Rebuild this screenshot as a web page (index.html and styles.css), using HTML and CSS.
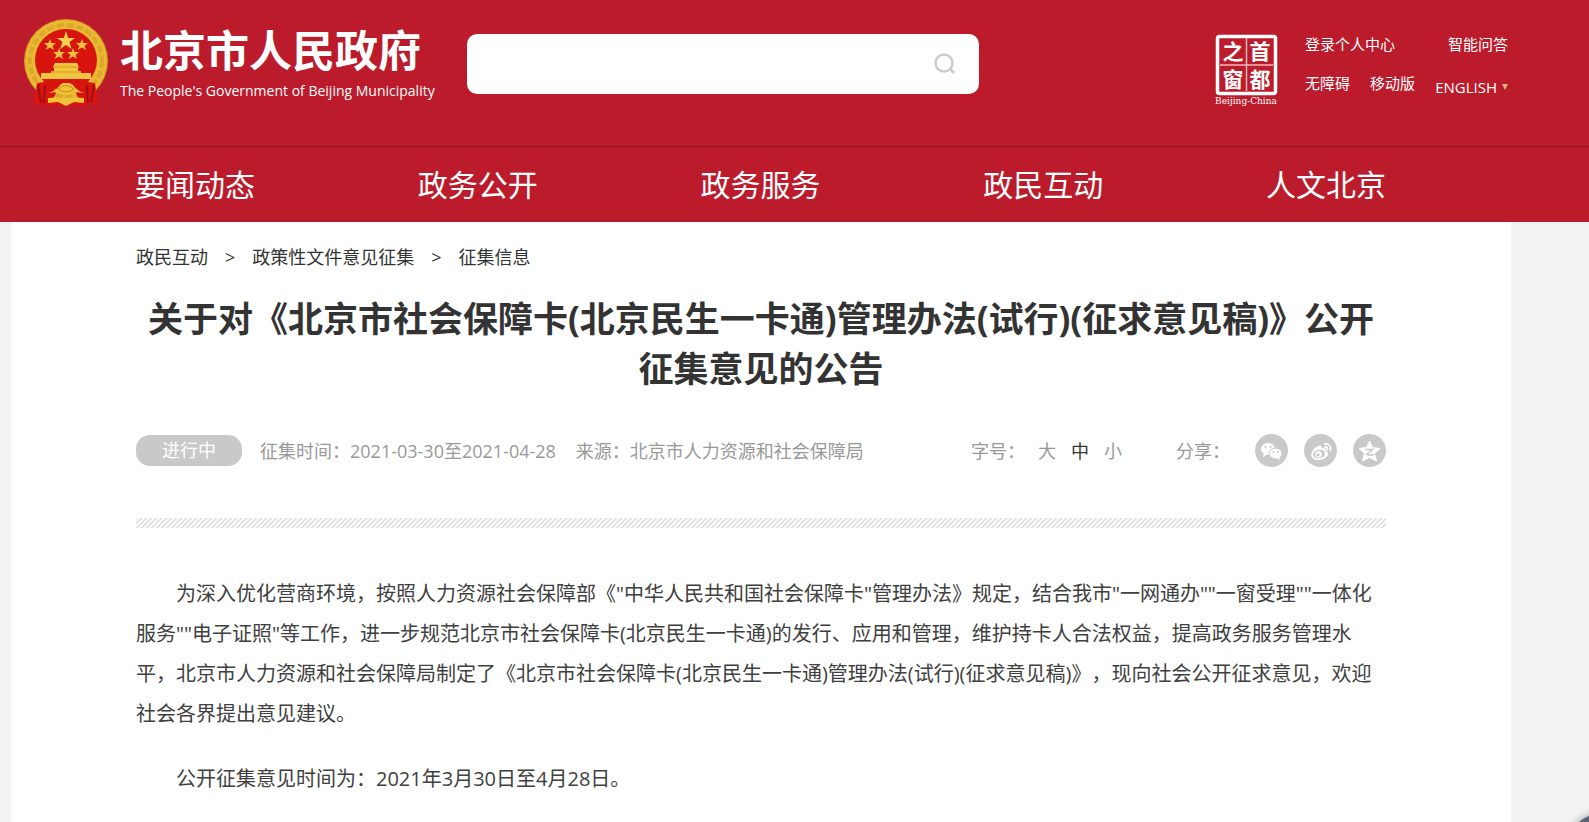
FILE: index.html
```html
<!DOCTYPE html>
<html lang="zh-CN">
<head>
<meta charset="utf-8">
<title>北京市人民政府</title>
<link rel="stylesheet" href="styles.css">
</head>
<body>
<header class="header">
  <div class="top">
    <a class="brand" href="#">
      <svg class="emblem" viewBox="0 0 84 88" aria-hidden="true">
        <path d="M12 62L10 84L26 87H58L74 84L72 62Z" fill="#d8140f"/>
        <circle cx="42" cy="42" r="42" fill="#cf9a1e"/>
        <circle cx="42" cy="42" r="41" fill="#e9b935"/>
        <circle cx="42" cy="42" r="36" fill="none" stroke="#dca828" stroke-width="4" stroke-dasharray="7 3"/>
        <circle cx="42" cy="41" r="31" fill="#d8140f"/>
        <path d="M10 85L13 64L27 62L32 74L26 87ZM74 85L71 64L57 62L52 74L58 87Z" fill="#d8140f"/>
        <path d="M14 66L17 84M21 66L20 84M70 66L67 84M63 66L64 84" stroke="#9d0f12" stroke-width="2"/>
        <path d="M42 12L44.200 19H51L45.500 23L47.500 30L42 26L36 30L38.500 23L33 19H39.800Z" fill="#f5d24a"/>
        <g fill="#edc13b">
          <path d="M26 20L27.500 24H32L28.500 27L30 31L26 28.500L21.500 31L23.500 27L20 24H24.500Z"/>
          <path d="M58 20L59.500 24H64L60.500 27L62 31L58 28.500L53.500 31L55.500 27L52 24H56.500Z"/>
          <path d="M35 29L36.500 33H41L37.500 36L39 40L35 37.500L30.500 40L32.500 36L29 33H33.500Z"/>
          <path d="M49 29L50.500 33H55L51.500 36L53 40L49 37.500L44.500 40L46.500 36L43 33H47.500Z"/>
        </g>
        <path d="M31 44H53L55 48H54V52H57V54H67V60H17V54H27V52H30V48H29Z" fill="#f0c641"/>
        <path d="M29 48H55M27 53H57" stroke="#d69a18" stroke-width="1"/>
        <path d="M24 74Q32 72 36 66L39 64H46L49 66Q53 72 60 74L50 73Q42 79 34 73Z" fill="#efc23a"/>
        <path d="M24 79Q32 78 42 79Q52 78 60 79V84L50 83L42 87L34 83L24 84Z" fill="#efc23a"/>
        <path d="M34 70Q42 63 50 70Q42 76 34 70Z" fill="none" stroke="#c98c12" stroke-width="1"/>
      </svg>
      <span class="brand-text">
        <span class="brand-cn">北京市人民政府</span>
        <span class="brand-en">The People's Government of Beijing Municipality</span>
      </span>
    </a>
    <form class="search" role="search">
      <input class="search-input" type="text" aria-label="搜索">
      <button class="search-btn" type="button" aria-label="搜索">
        <svg viewBox="0 0 22 22" width="22" height="22"><circle cx="10" cy="10" r="8.500" fill="none" stroke="#ccc" stroke-width="2.500"/><path d="M16 16L20 20" stroke="#ccc" stroke-width="3"/></svg>
      </button>
    </form>
    <div class="tools">
      <svg class="seal" viewBox="0 0 68 72" role="img" aria-label="首都之窗">
        <rect x="5.500" y="2.500" width="58" height="57" rx="2" fill="none" stroke="#fff" stroke-width="3.500"/>
        <path d="M8 31H61M34.500 4V57" stroke="#f0b8bd" stroke-width="1.500"/>
        <text class="seal-cn" x="21" y="25">之</text>
        <text class="seal-cn" x="48" y="25">首</text>
        <text class="seal-cn" x="21" y="53">窗</text>
        <text class="seal-cn" x="48" y="53">都</text>
        <text class="seal-en" x="34" y="70">Beijing-China</text>
      </svg>
      <div class="links">
        <div class="links-row"><a href="#">登录个人中心</a><a href="#">智能问答</a></div>
        <div class="links-row"><a href="#">无障碍</a><a href="#">移动版</a><a class="lang" href="#">ENGLISH<i class="caret"></i></a></div>
      </div>
    </div>
  </div>
  <nav class="nav">
    <a href="#">要闻动态</a><a href="#">政务公开</a><a href="#">政务服务</a><a href="#">政民互动</a><a href="#">人文北京</a>
  </nav>
</header>
<main class="page">
  <nav class="crumbs" aria-label="面包屑"><a href="#">政民互动</a><span>&gt;</span><a href="#">政策性文件意见征集</a><span>&gt;</span><a href="#">征集信息</a></nav>
  <h1 class="title">关于对《北京市社会保障卡(北京民生一卡通)管理办法(试行)(征求意见稿)》公开征集意见的公告</h1>
  <div class="meta">
    <span class="status">进行中</span>
    <span class="time">征集时间：2021-03-30至2021-04-28</span>
    <span class="source">来源：北京市人力资源和社会保障局</span>
    <div class="sizes"><span class="sizes-label">字号：</span><button type="button">大</button><button type="button" class="on">中</button><button type="button">小</button></div>
    <div class="share">
      <span>分享：</span>
      <a href="#" aria-label="微信"><svg viewBox="0 0 33 33"><circle cx="16.500" cy="16.500" r="16.500" fill="#c9c9c9"/><ellipse cx="13" cy="15" rx="7" ry="6" fill="#fff"/><path d="M9 19L8 23L13 20Z" fill="#fff"/><ellipse cx="20.500" cy="19.500" rx="6.500" ry="5.500" fill="#fff" stroke="#c9c9c9"/><path d="M21 24L25 26L24 22Z" fill="#fff"/><g fill="#c9c9c9"><circle cx="10.500" cy="13" r="1"/><circle cx="15.500" cy="13" r="1"/><circle cx="18.500" cy="18" r="1"/><circle cx="23" cy="18" r="1"/></g></svg></a>
      <a href="#" aria-label="微博"><svg viewBox="0 0 33 33"><circle cx="16.500" cy="16.500" r="16.500" fill="#c9c9c9"/><path d="M14 12C17 10 18.500 12 17.500 14.500C21 13 22.500 14.500 21.500 17C24 18 25 20 23 22.500C20 26.500 11 27.500 8 23.500C5.500 20 9 14.500 14 12Z" fill="#fff"/><ellipse cx="15" cy="20" rx="6" ry="4.300" fill="#c9c9c9" transform="rotate(-10 15 20)"/><circle cx="14.500" cy="20.200" r="3.300" fill="#fff"/><circle cx="14" cy="20.800" r="1.500" fill="#c9c9c9"/><path d="M21 13Q24 12.500 23.500 16M20.500 10Q27.500 9 26.500 16.500" fill="none" stroke="#fff" stroke-width="1.700" stroke-linecap="round"/></svg></a>
      <a href="#" aria-label="QQ空间"><svg viewBox="0 0 33 33"><circle cx="16.500" cy="16.500" r="16.500" fill="#c9c9c9"/><path d="M16.500 7L19.500 13.500L27 14.500L21.500 19.500L23.500 27L16.500 23.500L9.500 27L11.500 19.500L6 14.500L13.500 13.500Z" fill="#fff" stroke="#fff" stroke-linejoin="round"/><path d="M12.500 15.500H19.500L13.500 20.500Q17 21.500 21 20.500" fill="none" stroke="#c9c9c9" stroke-width="1.500"/></svg></a>
    </div>
  </div>
  <div class="stripe"></div>
  <article class="article">
    <p>为深入优化营商环境，按照人力资源社会保障部《"中华人民共和国社会保障卡"管理办法》规定，结合我市"一网通办""一窗受理""一体化服务""电子证照"等工作，进一步规范北京市社会保障卡(北京民生一卡通)的发行、应用和管理，维护持卡人合法权益，提高政务服务管理水平，北京市人力资源和社会保障局制定了《北京市社会保障卡(北京民生一卡通)管理办法(试行)(征求意见稿)》，现向社会公开征求意见，欢迎社会各界提出意见建议。</p>
    <p>公开征集意见时间为：2021年3月30日至4月28日。</p>
  </article>
</main>
<div class="float-ball"></div>
</body>
</html>
```
FILE: styles.css
```css
* { box-sizing: border-box; }
body {
  margin: 0;
  background: #f3f3f3;
  color: #333;
  font-family: "Open Sans", "Noto Sans CJK SC", sans-serif;
  font-size: 18px;
  text-spacing-trim: space-all;
}
a { color: inherit; text-decoration: none; }
button { padding: 0; border: 0; background: none; color: inherit; font: inherit; cursor: pointer; }
.header { background: #bc1b2c; color: #fff; }
.top { display: flex; align-items: flex-start; height: 147px; padding: 0 81px 0 24px; border-bottom: 1px solid #8f1420; }
.brand { display: flex; gap: 12px; width: 443px; padding-top: 19px; }
.emblem { width: 84px; height: 88px; }
.brand-text { display: flex; flex-direction: column; padding-top: 5px; white-space: nowrap; }
.brand-cn { font-size: 43px; font-weight: 700; line-height: 54px; }
.brand-en { font-size: 14px; line-height: 26px; }
.search { display: flex; width: 512px; height: 60px; margin-top: 34px; border-radius: 10px; background: #fff; }
.search-input { flex: 1; min-width: 0; padding: 0 20px; border: 0; background: none; font: inherit; outline: 0; }
.search-btn { display: grid; place-items: center; width: 68px; }
.tools { display: flex; gap: 25px; margin-left: auto; padding-top: 34px; }
.seal { width: 68px; height: 72px; }
.seal-cn { fill: #fff; font: 700 21px/1 "Noto Sans CJK SC", sans-serif; text-anchor: middle; }
.seal-en { fill: #fff; font: 9px "DejaVu Serif", serif; text-anchor: middle; }
.links { width: 203px; font-size: 15px; line-height: 20px; white-space: nowrap; }
.links-row { display: flex; justify-content: space-between; margin-bottom: 19px; }
.lang { padding-top: 4px; }
.caret { display: inline-block; margin: 0 0 3px 5px; border: 3px solid transparent; border-top: 6px solid #d8b878; border-bottom: 0; }
.nav { display: flex; justify-content: space-between; padding: 0 203px 0 135px; font-size: 30px; line-height: 75px; }
.page { min-height: 600px; margin: 0 78px 0 11px; padding: 20px 125px 0; background: #fff; }
.crumbs { display: flex; gap: 17px; line-height: 30px; }
.title { margin: 22px 0 0; font-size: 35px; line-height: 50px; text-align: center; }
.meta { display: flex; align-items: center; height: 34px; margin-top: 39px; color: #999; white-space: nowrap; }
.status { width: 106px; border-radius: 14px; background: #c9c9c9; color: #fff; line-height: 31px; text-align: center; }
.time { margin-left: 18px; }
.source { margin-left: 20px; }
.sizes { display: flex; gap: 15px; margin-left: auto; }
.sizes-label { width: 52px; }
.on { color: #333; }
.share { display: flex; align-items: center; gap: 16px; margin-left: 54px; }
.share span { width: 63px; }
.share svg { display: block; width: 33px; height: 33px; }
.stripe { height: 10px; margin-top: 51px; background: linear-gradient(135deg, #e0e0e0 0 12%, #fff 25% 38%, #e0e0e0 50% 62%, #fff 75% 88%, #e0e0e0) 0 0 / 5px 5px; }
.article { padding-top: 46px; color: #404040; font-size: 20px; line-height: 40px; }
.article p { margin: 0 0 25px; text-indent: 2em; }
.float-ball { position: fixed; right: -43px; bottom: -56px; width: 64px; height: 64px; border-radius: 50%; background: #5b6270; box-shadow: 0 0 8px #999; }
```
